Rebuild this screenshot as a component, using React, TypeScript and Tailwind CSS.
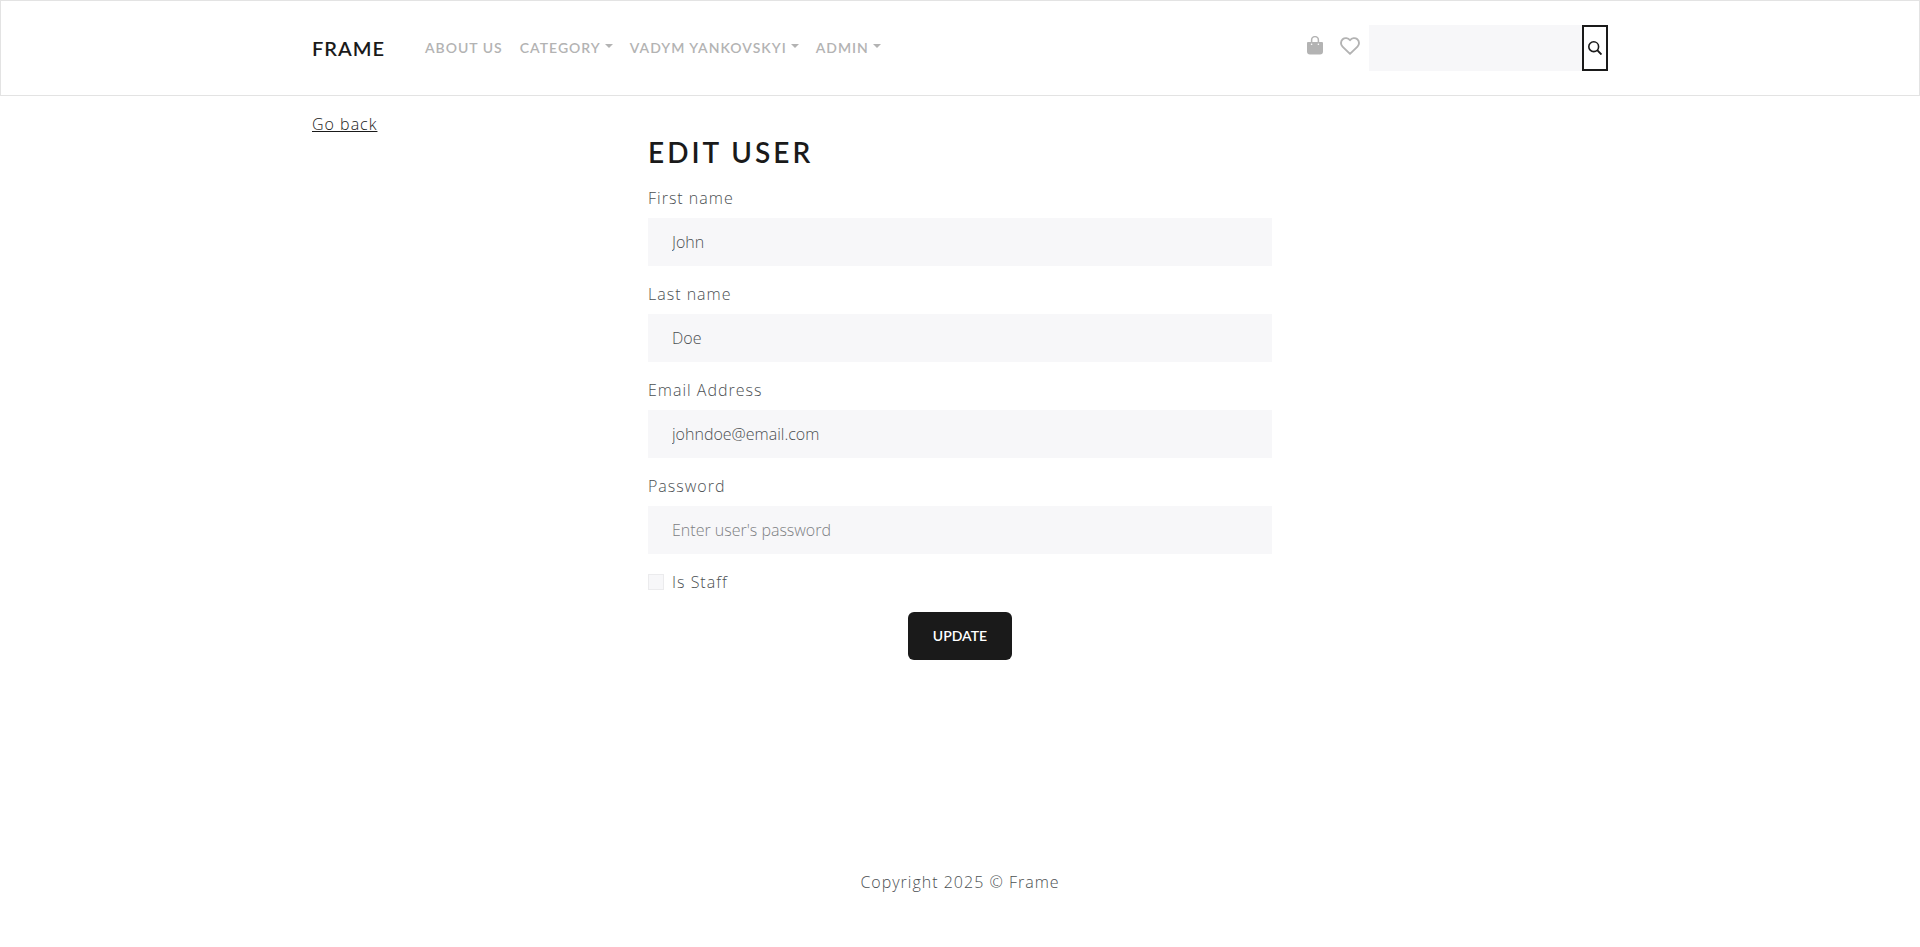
import React from "react";

const inputClass =
  "block h-12 w-full bg-[#f7f7f9] px-6 text-base tracking-normal text-[#4b4f52] outline-none placeholder:text-[#7d8083]";

function Caret() {
  return (
    <svg className="mb-1 ml-1 h-1 w-2" viewBox="0 0 8 4" fill="currentColor" aria-hidden="true">
      <path d="M0 0h8L4 4z" />
    </svg>
  );
}

function BagIcon() {
  return (
    <svg width="16" height="19" viewBox="0 0 16 19" fill="none" aria-hidden="true">
      <path
        fill="currentColor"
        fillRule="evenodd"
        d="M1.2 6h13.6c.7 0 1.2.5 1.2 1.200V15.500a3 3 0 0 1-3 3H3a3 3 0 0 1-3-3V7.200C0 6.500.5 6 1.200 6ZM4.600 7.400a.8.8 0 1 0 0 1.600.8.8 0 0 0 0-1.600Zm6.800 0a.8.8 0 1 0 0 1.600.8.8 0 0 0 0-1.600Z"
      />
      <path stroke="currentColor" strokeWidth="1.500" d="M4.600 6.500V4a3.400 3.400 0 0 1 6.800 0v2.500" />
    </svg>
  );
}

function HeartIcon() {
  return (
    <svg width="20" height="18" viewBox="0 0 20 18" fill="none" aria-hidden="true">
      <path
        stroke="currentColor"
        strokeWidth="1.900"
        strokeLinejoin="round"
        d="M10 3.300C11.900.8 15.200.4 17.300 2.300c2.200 2 2.300 5.200.2 7.300L10 16.900 2.500 9.600C.4 7.500.5 4.300 2.700 2.300 4.800.4 8.100.8 10 3.300Z"
      />
    </svg>
  );
}

function SearchIcon() {
  return (
    <svg width="14" height="14" viewBox="0 0 14 14" fill="none" stroke="currentColor" aria-hidden="true">
      <circle cx="5.700" cy="5.700" r="4.900" strokeWidth="1.600" />
      <path strokeWidth="1.900" d="m9.200 9.200 4.300 4.300" />
    </svg>
  );
}

function Field({
  id,
  label,
  ...rest
}: { id: string; label: string } & React.InputHTMLAttributes<HTMLInputElement>) {
  return (
    <div className="mb-4">
      <label htmlFor={id} className="mb-2 block">
        {label}
      </label>
      <input id={id} className={inputClass} {...rest} />
    </div>
  );
}

const menus = ["Category", "Vadym Yankovskyi", "Admin"];

export default function App() {
  return (
    <div className="flex min-h-screen flex-col bg-white font-['Open_Sans',sans-serif] text-base font-light text-[#4b4f52]">
      <header className="border border-[#e3e3e3] py-6 font-['Lato',sans-serif]">
        <div className="mx-auto flex max-w-[1320px] items-center px-3">
          <a href="#home" className="mr-8 text-xl font-semibold tracking-[1px] text-[#1a1a1a] uppercase">
            Frame
          </a>
          <nav className="flex grow items-center gap-px text-sm font-semibold tracking-[1px] text-[#b3b3b3] uppercase">
            <a href="#about" className="px-2 py-3">
              About us
            </a>
            {menus.map((name) => (
              <button key={name} type="button" className="flex items-center px-2 py-3 tracking-[1px] uppercase">
                {name}
                <Caret />
              </button>
            ))}
          </nav>
          <div className="flex items-center text-[#b3b3b3]">
            <a href="#cart" aria-label="Cart" className="mr-[17px] mb-[6px]">
              <BagIcon />
            </a>
            <a href="#favourites" aria-label="Favourites" className="mr-[9px] mb-1">
              <HeartIcon />
            </a>
            <form className="flex" onSubmit={(e) => e.preventDefault()}>
              <input type="text" aria-label="Search" className="h-[46px] w-[213px] bg-[#f7f7f9] px-6 text-[#55595c] outline-none" />
              <button
                type="submit"
                aria-label="Submit search"
                className="flex h-[46px] w-[26px] items-center justify-center border-2 border-[#1a1a1a] text-[#1a1a1a]"
              >
                <SearchIcon />
              </button>
            </form>
          </div>
        </div>
      </header>

      <main className="mx-auto w-full max-w-[1320px] grow px-3 py-4 tracking-[1px]">
        <a href="#back" className="block w-fit text-[#1a1a1a] underline">
          Go back
        </a>
        <form className="mx-auto max-w-[624px]" onSubmit={(e) => e.preventDefault()}>
          <h1 className="mb-[18px] font-['Lato',sans-serif] text-[28px] leading-8 font-semibold tracking-[3px] text-[#1a1a1a] uppercase">
            Edit user
          </h1>
          <Field id="first-name" label="First name" type="text" defaultValue="John" />
          <Field id="last-name" label="Last name" type="text" defaultValue="Doe" />
          <Field id="email" label="Email Address" type="email" defaultValue="johndoe@email.com" />
          <Field id="password" label="Password" type="password" placeholder="Enter user's password" />
          <div className="mb-[18px] flex items-center gap-2">
            <input
              id="is-staff"
              type="checkbox"
              className="size-4 appearance-none border border-[#ebebed] bg-[#f7f7f9] checked:bg-[#1a1a1a]"
            />
            <label htmlFor="is-staff">Is Staff</label>
          </div>
          <button
            type="submit"
            className="mx-auto block h-12 rounded-md bg-[#1a1a1a] px-[25px] font-['Lato',sans-serif] text-sm font-semibold tracking-normal text-white uppercase"
          >
            Update
          </button>
        </form>
      </main>

      <footer className="pt-4 pb-[53px] text-center tracking-[1px]">Copyright 2025 © Frame</footer>
    </div>
  );
}
